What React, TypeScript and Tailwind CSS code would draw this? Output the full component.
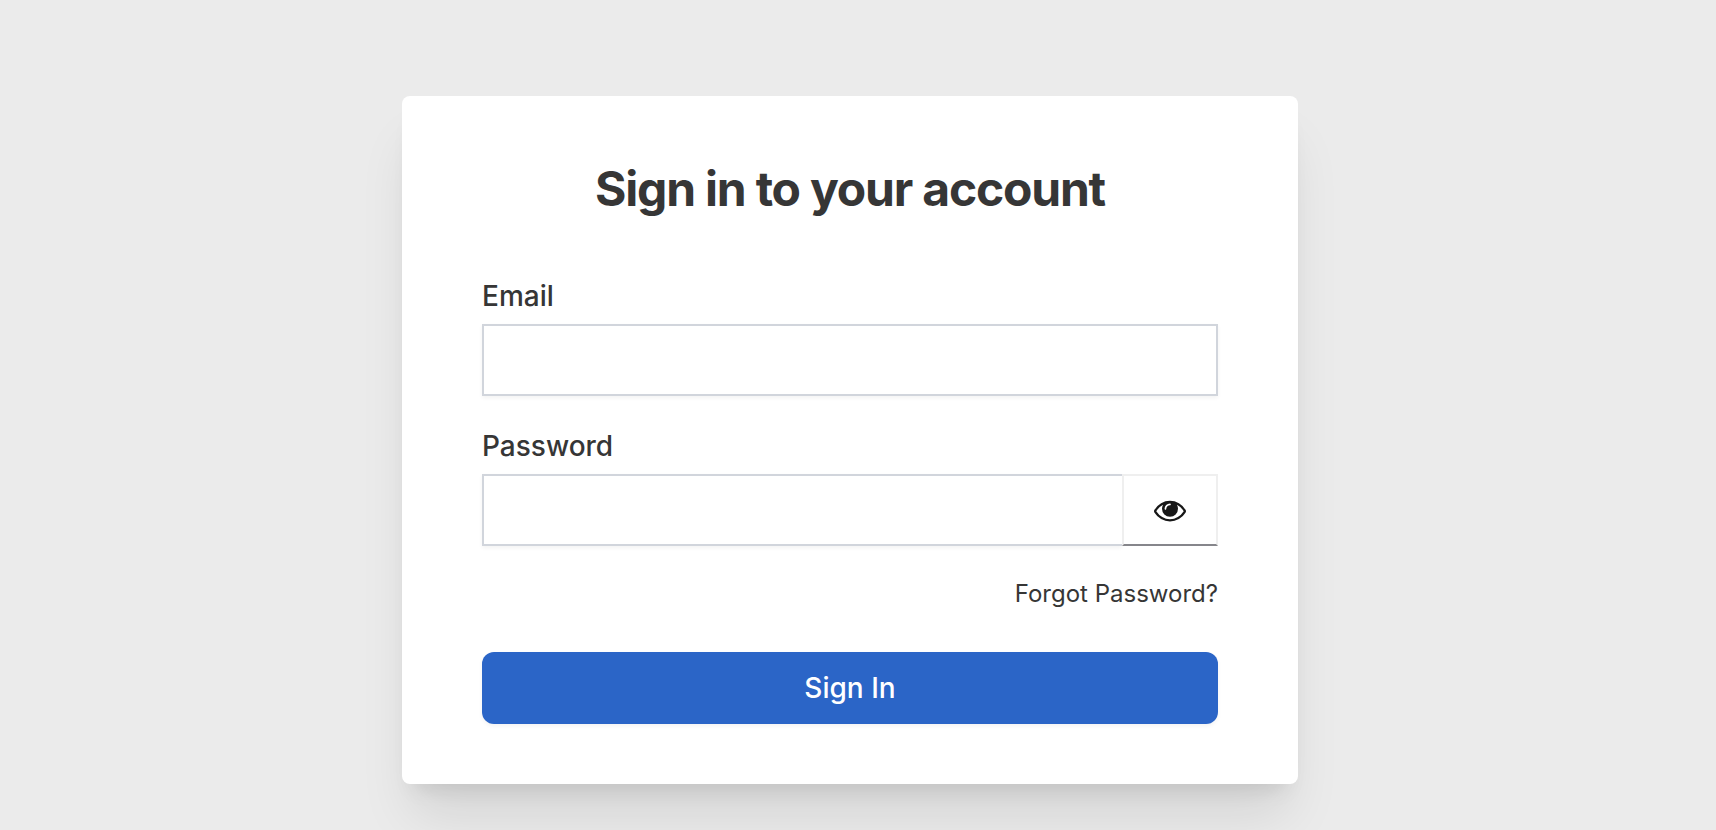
import { useState } from "react";

const labelClass = "block text-[28px] leading-10 font-medium text-[#363636]";
const inputClass =
  "h-[72px] border-2 border-gray-300 bg-white px-6 text-[28px] text-[#363636] shadow-[0_2px_4px_rgba(0,0,0,0.05)] outline-none focus:border-[#2b65c7]";

function EyeIcon() {
  return (
    <svg viewBox="0 0 1792 1792" className="size-8" fill="currentColor" aria-hidden="true">
      <path d="M1664 960q-152-236-381-353 61 104 61 225 0 185-131.5 316.5t-316.5 131.5-316.5-131.5-131.5-316.5q0-121 61-225-229 117-381 353 133 205 333.5 326.5t434.5 121.5 434.5-121.5 333.5-326.5zm-720-384q0-20-14-34t-34-14q-125 0-214.5 89.5t-89.5 214.5q0 20 14 34t34 14 34-14 14-34q0-86 61-147t147-61q20 0 34-14t14-34zm848 384q0 34-20 69-140 230-376.5 368.5t-499.5 138.5-499.5-139-376.5-368q-20-35-20-69t20-69q140-229 376.5-368t499.5-139 499.5 139 376.5 368q20 35 20 69z" />
    </svg>
  );
}

export default function App() {
  const [showPassword, setShowPassword] = useState(false);

  return (
    <main className="min-h-screen bg-[#ebebeb] pt-24 pr-4 font-['Inter',sans-serif]">
      <div className="mx-auto max-w-4xl rounded-lg bg-white px-20 pt-16 pb-[60px] shadow-[0_40px_50px_-10px_rgba(0,0,0,0.1),0_16px_20px_-12px_rgba(0,0,0,0.1)]">
        <h1 className="text-center text-5xl leading-[58px] font-bold tracking-tight text-[#363636]">
          Sign in to your account
        </h1>
        <form className="mt-[58px]" onSubmit={(e) => e.preventDefault()}>
          <label htmlFor="email" className={labelClass}>
            Email
          </label>
          <input id="email" type="email" className={`mt-2 block w-full ${inputClass}`} />

          <label htmlFor="password" className={`mt-[30px] ${labelClass}`}>
            Password
          </label>
          <div className="mt-2 flex">
            <input
              id="password"
              type={showPassword ? "text" : "password"}
              className={`min-w-0 flex-1 ${inputClass} border-r-0`}
            />
            <button
              type="button"
              aria-label="Toggle password visibility"
              onClick={() => setShowPassword(!showPassword)}
              className="flex h-[72px] w-24 items-center justify-center border-2 border-[#efefef] border-b-[#86868b] bg-white text-[#171717]"
            >
              <EyeIcon />
            </button>
          </div>

          <div className="mt-[30px] text-right">
            <a href="#forgot" className="inline-block text-2xl leading-9 text-[#363636]">
              Forgot Password?
            </a>
          </div>

          <button
            type="submit"
            className="mt-10 block h-[72px] w-full rounded-xl bg-[#2b65c7] text-[28px] leading-10 font-medium text-white shadow-[0_2px_4px_rgba(0,0,0,0.05)]"
          >
            Sign In
          </button>
        </form>
      </div>
    </main>
  );
}
